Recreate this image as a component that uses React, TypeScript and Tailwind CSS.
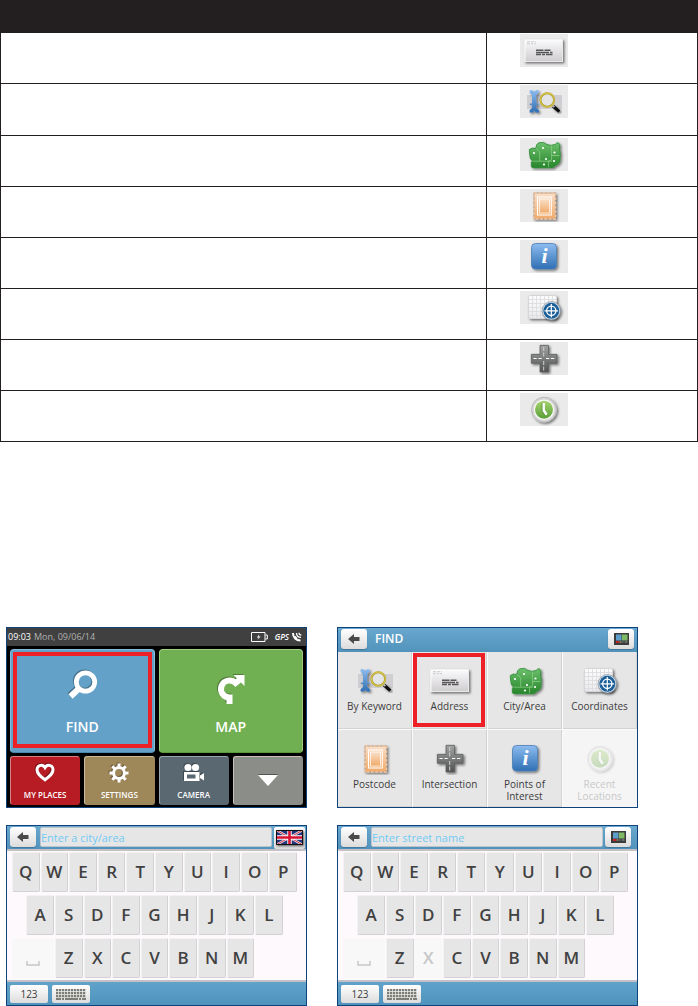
import type { ReactNode } from 'react'

function IconDefs() {
  return (
    <svg width="0" height="0" className="absolute" aria-hidden="true">
      <defs>
        <linearGradient id="paper" x1="0" y1="0" x2="0" y2="1">
          <stop offset="0" stopColor="#fbfafc" /><stop offset="1" stopColor="#cfcdd0" />
        </linearGradient>
        <linearGradient id="blue" x1="0" y1="0" x2="0" y2="1">
          <stop offset="0" stopColor="#8dbcf0" /><stop offset="1" stopColor="#2f6fb3" />
        </linearGradient>
        <linearGradient id="green" x1="0" y1="0" x2="0" y2="1">
          <stop offset="0" stopColor="#6cc06c" /><stop offset="1" stopColor="#27862b" />
        </linearGradient>
        <linearGradient id="orange" x1="0" y1="0" x2="0" y2="1">
          <stop offset="0" stopColor="#f9dfc9" /><stop offset="1" stopColor="#f0aa68" />
        </linearGradient>
        <linearGradient id="road" x1="0" y1="0" x2="0" y2="1">
          <stop offset="0" stopColor="#a2a3a3" /><stop offset="1" stopColor="#515252" />
        </linearGradient>
        <linearGradient id="lime" x1="0" y1="0" x2="0" y2="1">
          <stop offset="0" stopColor="#a5d46f" /><stop offset="1" stopColor="#5b9f38" />
        </linearGradient>
        <filter id="drop" x="-20%" y="-20%" width="150%" height="150%">
          <feDropShadow dx="1.5" dy="1.5" stdDeviation="1" floodColor="#000" floodOpacity="0.5" />
        </filter>
      </defs>
    </svg>
  )
}

const icons: Record<string, ReactNode> = {
  address: (
    <>
      <rect x="4.5" y="5.5" width="38" height="22" fill="url(#paper)" stroke="#e9e9e9" filter="url(#drop)" />
      <path d="M5 27V6h37" fill="none" stroke="#fff" strokeWidth="0.8" />
      <path d="M7 7.7h9M7 9.7h6M14 9.7h2" stroke="#cbcbcb" strokeDasharray="3 1" />
      <path d="M16 16.2h7.5M24.5 16.2h6M16 18.4h13M30 18.4h2.5M16 20.4h5M22 20.4h3M26 20.4h6.5" stroke="#58585b" strokeWidth="1.5" />
    </>
  ),
  keyword: (
    <>
      <rect x="7" y="10" width="35" height="14" fill="#cfced2" />
      <path
        d="M9.5 5.5l2-.5 2.500 1.500L17 5l2 .8-.5 2L16.200 10v8.500h2.300v1.600h-2.300V23l3 2.300-.5 2.200-2 .2L14.200 26l-2.300 1.700-2.200-.3-.2-2.100L12 23v-2.900H9.800v-1.600H12V10L9.800 8z"
        fill="url(#blue)" filter="url(#drop)"
      />
      <path d="M33 21l6.300 5.600" stroke="#111" strokeWidth="3.200" filter="url(#drop)" />
      <path d="M32 20l2.400 2.200" stroke="#c9c9c9" strokeWidth="1.600" />
      <circle cx="27.3" cy="15" r="6.800" fill="#e4e4e6" stroke="#a99a2c" strokeWidth="2" />
      <circle cx="27.3" cy="15" r="6.900" fill="none" stroke="#d6c443" strokeWidth="1.200" />
    </>
  ),
  city: (
    <>
      <path
        d="M9.3 11.5l3-1.4 3.5.3.8-3.6 2-2 5-.4 3 2 4 .9 4.500-.8 1.600-1.500 1.800-.2 1.400 2-.4 4.500.8 3-.3 8.500-1.400 2.700-3.600 2.400-2.200 1.800H13l-1.700-.9v-4.400l1.200-1.700-2-1.800-.8-4.200z"
        fill="url(#green)" stroke="#2c8a33" strokeWidth="0.800" filter="url(#drop)"
      />
      <path
        d="M16 10.500l3.700 3.200v9.300M12.500 23.200h19.500M28.600 23.200v6M31.600 7.500v14.200l-3.200 1.500M31.600 17.500H39.500"
        fill="none" stroke="#8fd18d" strokeWidth="0.700"
      />
      <g fill="#fff">
        <circle cx="23" cy="10" r="1.100" /><circle cx="14" cy="15" r="1.100" />
        <circle cx="34.500" cy="14.500" r="1.100" /><circle cx="26" cy="21" r="1.100" />
        <circle cx="34" cy="23" r="1.100" /><circle cx="24" cy="26.500" r="1.100" />
      </g>
    </>
  ),
  postcode: (
    <>
      <rect x="13.500" y="3.500" width="22.500" height="27" fill="#a39a93" filter="url(#drop)" />
      <rect x="14.500" y="4.500" width="20.500" height="25" fill="url(#orange)" />
      <rect x="14" y="4" width="21.500" height="26" fill="none" stroke="#f3c59d" strokeWidth="1.600" strokeDasharray="2.800 1.500" />
      <rect x="17.500" y="8" width="13.800" height="18" fill="none" stroke="#fff" />
      <rect x="19.500" y="10" width="10" height="14" fill="url(#orange)" stroke="#fff" strokeWidth="0.700" />
    </>
  ),
  info: (
    <>
      <rect x="11.500" y="3.500" width="25" height="25.500" rx="4" fill="url(#blue)" stroke="#4b7eb6" strokeWidth="0.800" filter="url(#drop)" />
      <text x="24.500" y="22.500" textAnchor="middle" fontFamily="Liberation Serif, serif" fontSize="22" fontWeight="bold" fontStyle="italic" fill="#fff">i</text>
    </>
  ),
  coordinates: (
    <>
      <rect x="8.500" y="4.500" width="28" height="23" rx="2" fill="url(#paper)" stroke="#d6d6d9" filter="url(#drop)" />
      <rect x="9" y="5" width="27" height="22" rx="2" fill="#fdfdfe" fillOpacity="0.600" />
      <path d="M12.500 5v22M16.500 5v22M20.500 5v22M24.500 5v22M28.500 5v22M32.500 5v22M9 8.500h27M9 12.500h27M9 16.500h27M9 20.500h27M9 24.500h27" stroke="#dadade" strokeWidth="0.800" />
      <circle cx="31.300" cy="19.800" r="9.200" fill="#dfe6ec" stroke="#6c7f90" strokeWidth="0.600" filter="url(#drop)" />
      <circle cx="31.300" cy="19.800" r="8" fill="#1b5f99" />
      <circle cx="31.300" cy="19.800" r="4.600" fill="none" stroke="#fff" strokeWidth="1.300" />
      <path d="M31.300 13v13.600M24.500 19.800h13.600" stroke="#fff" strokeWidth="1.200" />
    </>
  ),
  intersection: (
    <>
      <path d="M20 3.300h8.500v9H37v9h-8.500V30H20v-8.700h-8.700v-9H20z" fill="url(#road)" stroke="#5c5d5d" strokeWidth="0.800" filter="url(#drop)" />
      <path d="M13.500 16.500h3.200M18.500 16.500h3.200M26 16.500h3.200M31 16.500h3.200" stroke="#fff" strokeWidth="1.100" />
      <path d="M23.700 5v4M23.700 10.500v4M23.700 19v4M23.700 24.500v4" stroke="#cfcfcf" />
    </>
  ),
  recent: (
    <>
      <circle cx="24" cy="16.700" r="12.400" fill="#d6d7d6" stroke="#b8b9b8" filter="url(#drop)" />
      <circle cx="24" cy="16.700" r="10.200" fill="#fafafa" />
      <circle cx="24" cy="16.700" r="9" fill="url(#lime)" />
      <path d="M23.600 10v7.300l3 4.500" fill="none" stroke="#fff" strokeWidth="2.600" />
      <path d="M22 10v8.200l3.200 4.400" fill="none" stroke="#588a3a" strokeWidth="0.700" />
    </>
  ),
}

function SearchIcon({ name }: { name: string }) {
  return (
    <svg viewBox="0 0 48 33" width="48" height="33" className="block" aria-hidden="true">
      {icons[name]}
    </svg>
  )
}

const rows = [
  { icon: 'address', cell: 'h-[51px] pt-px' },
  { icon: 'keyword', cell: 'h-[52px] pt-px' },
  { icon: 'city', cell: 'h-[51px] pt-[2px]' },
  { icon: 'postcode', cell: 'h-[51px] pt-[2px]' },
  { icon: 'info', cell: 'h-[51px] pt-[2px]' },
  { icon: 'coordinates', cell: 'h-[51px] pt-[2px]' },
  { icon: 'intersection', cell: 'h-[51px] pt-[2px]' },
  { icon: 'recent', cell: 'h-[51px] pt-[2px]' },
]

function IconTable() {
  return (
    <table className="w-full table-fixed border-separate border-spacing-0 border-x border-[#231f20]">
      <thead>
        <tr className="bg-[#231f20]">
          <th className="h-[33px] w-[486px] p-0" />
          <th className="p-0" />
        </tr>
      </thead>
      <tbody>
        {rows.map(row => (
          <tr key={row.icon}>
            <td className="border-r border-b border-[#231f20] p-0" />
            <td className={`border-b border-[#231f20] pr-0 pb-0 pl-[33px] align-top ${row.cell}`}>
              <div className="w-[48px] bg-[#eaeaea]"><SearchIcon name={row.icon} /></div>
            </td>
          </tr>
        ))}
      </tbody>
    </table>
  )
}

function Screen({ children }: { children: ReactNode }) {
  return <section className="border border-[#0f437c]">{children}</section>
}

/* ---------- home screen ---------- */

const smallTiles = [
  {
    label: 'MY PLACES',
    color: 'bg-[#b71c24] border-t-[#d98085] border-l-[#d98085]',
    icon: (
      <path d="M10 16.800C5 13 2 10.500 2 6.700 2 3.800 4.200 2.200 6.300 2.200c1.700 0 2.900.9 3.700 2.300.8-1.400 2-2.300 3.700-2.300 2.100 0 4.300 1.600 4.300 4.500 0 3.800-3 6.300-8 10.100z" fill="none" stroke="#fff" strokeWidth="3" />
    ),
  },
  {
    label: 'SETTINGS',
    color: 'bg-[#9e8759] border-t-[#cbbd9f] border-l-[#cbbd9f]',
    icon: (
      <>
        <circle cx="10" cy="10" r="5.400" fill="none" stroke="#fff" strokeWidth="3" />
        <g stroke="#fff" strokeWidth="3">
          <path d="M10 .5v4M10 15.500v4M.5 10h4M15.500 10h4M3.300 3.300l2.800 2.800M13.900 13.900l2.800 2.800M3.300 16.700l2.800-2.800M13.900 6.100l2.800-2.800" />
        </g>
      </>
    ),
  },
  {
    label: 'CAMERA',
    color: 'bg-[#5a6872] border-t-[#9ba5ac] border-l-[#9ba5ac]',
    icon: (
      <>
        <circle cx="4" cy="4.500" r="3.600" fill="#fff" />
        <circle cx="11.500" cy="4.500" r="3.600" fill="#fff" />
        <path d="M0 9h15.500v9H0z" fill="#fff" />
        <path d="M16 12.500l4-2.500v7.500l-4-2.500z" fill="#fff" />
        <path d="M3 11.500h8.500v4H3z" fill="#5a6872" />
      </>
    ),
  },
]

function BigTile({ label, color, icon, marked }: { label: string; color: string; icon: ReactNode; marked?: boolean }) {
  return (
    <button className={`relative col-span-2 flex h-[104px] flex-col items-center rounded-[4px] border pt-[19px] ${color}`}>
      <svg viewBox="0 0 32 36" width="32" height="36" className="drop-shadow-[-1px_-1px_0_rgba(0,0,0,0.3)]">{icon}</svg>
      <span className="mt-3 text-[14px] leading-[20px] font-semibold text-white">{label}</span>
      {marked && <span className="absolute inset-x-[2px] top-[2px] bottom-[4px] border-4 border-[#ee2027]" />}
    </button>
  )
}

function HomeScreen() {
  return (
    <Screen>
      <div className="flex h-[18px] items-center bg-[#404040] pr-1 pl-px text-[9px] leading-[12px]">
        <span className="font-medium text-white">09:03</span>
        <span className="ml-[3px] text-[#b0b0b0]">Mon, 09/06/14</span>
        <svg viewBox="0 0 17 10" width="17" height="10" className="ml-auto" aria-hidden="true">
          <path d="M.5.5h13.500v9H.5zM14.500 3h1.800v4h-1.800" fill="none" stroke="#fff" />
          <path d="M8.500 2L5.800 5.500h2L6.300 8l3.400-3.600H7.600z" fill="#fff" />
        </svg>
        <span className="ml-[7px] text-[8px] font-semibold text-white italic">GPS</span>
        <svg viewBox="0 0 10 10" width="10" height="10" className="ml-[3px]" aria-hidden="true">
          <path d="M1 1C1 5.500 4 8.500 8.500 8.500M2.500 4.500L5 7" fill="none" stroke="#fff" strokeWidth="2" />
          <path d="M4.500 1C4.500 3.800 6 5.300 9 5.300M7 .8C7 2.200 7.600 3 9.300 3" fill="none" stroke="#fff" strokeWidth="1.300" />
        </svg>
      </div>
      <div className="grid grid-cols-4 gap-x-1 gap-y-[3px] bg-black px-[3px] pt-[3px] pb-[2px]">
        <BigTile
          label="FIND"
          marked
          color="bg-[#63a1c8] border-[#86bbdc] border-b-[#4887ae]"
          icon={
            <>
              <circle cx="19.500" cy="13" r="9.200" fill="none" stroke="#fff" strokeWidth="4.700" />
              <path d="M12.500 20L4.500 27.500" stroke="#fff" strokeWidth="6" />
            </>
          }
        />
        <BigTile
          label="MAP"
          color="bg-[#71b052] border-[#9bd07f] border-b-[#5a9a3c]"
          icon={
            <>
              <path d="M14.500 35V28.500A8.500 8.500 0 1 1 20.500 14L25 10.500" fill="none" stroke="#fff" strokeWidth="6" />
              <path d="M18.500 6h11v11z" fill="#fff" />
            </>
          }
        />
        {smallTiles.map(tile => (
          <button key={tile.label} className={`flex h-[49px] flex-col items-center rounded-[3px] border border-transparent pt-[6px] ${tile.color}`}>
            <svg viewBox="0 0 20 20" width="20" height="20" className="drop-shadow-[-1px_-1px_0_rgba(0,0,0,0.3)]">{tile.icon}</svg>
            <span className="mt-[7px] text-[8px] leading-[10px] font-semibold text-white">{tile.label}</span>
          </button>
        ))}
        <button aria-label="More" className="flex h-[49px] items-center justify-center rounded-[3px] border border-[#8b8d88] border-t-[#c9c0b6] border-l-[#c9c0b6] bg-[#8b8d88]">
          <svg viewBox="0 0 20 11" width="20" height="11" className="drop-shadow-[0_-1px_0_rgba(0,0,0,0.4)]">
            <path d="M0 0h20L10 11z" fill="#fff" />
          </svg>
        </button>
      </div>
    </Screen>
  )
}

/* ---------- shared header buttons ---------- */

function BackButton() {
  return (
    <button aria-label="Back" className="flex h-[20px] w-[26px] shrink-0 items-center justify-center rounded-[3px] bg-linear-to-b from-white to-[#dcdcdc] shadow-[0_1px_1px_#44759a]">
      <svg viewBox="0 0 12 10" width="12" height="10">
        <path d="M0 5L6 0v3h5.500v4H6v3z" fill="#4a4a4a" />
      </svg>
    </button>
  )
}

function HomeButton() {
  return (
    <button aria-label="Home" className="flex h-[20px] w-[26px] shrink-0 items-center justify-center rounded-[3px] bg-linear-to-b from-white to-[#dcdcdc] shadow-[0_1px_1px_#44759a]">
      <svg viewBox="0 0 15 12" width="15" height="12">
        <path d="M0 0h15v12H0z" fill="#3b3b3b" />
        <path d="M2 1.500h5.500v6H2z" fill="#5c9fca" />
        <path d="M8 1.500h5.500v6H8z" fill="#7fb965" />
        <path d="M2 8h3v2H2z" fill="#c81f27" />
        <path d="M5.500 8h2v2h-2z" fill="#8a774e" />
        <path d="M8 8h2.500v2H8z" fill="#4c5860" />
        <path d="M11 8h2.500v2H11z" fill="#6a6a6a" />
      </svg>
    </button>
  )
}

/* ---------- find menu ---------- */

const findOptions = [
  { icon: 'keyword', label: 'By Keyword' },
  { icon: 'address', label: 'Address', marked: true },
  { icon: 'city', label: 'City/Area' },
  { icon: 'coordinates', label: 'Coordinates' },
  { icon: 'postcode', label: 'Postcode' },
  { icon: 'intersection', label: 'Intersection' },
  { icon: 'info', label: 'Points of Interest' },
  { icon: 'recent', label: 'Recent Locations', disabled: true },
]

function FindScreen() {
  return (
    <Screen>
      <header className="flex h-[24px] items-start bg-linear-to-b from-[#69a8cf] to-[#5193bb] px-[3px] pt-px">
        <BackButton />
        <h2 className="ml-2 text-[12px] leading-[20px] font-semibold text-white">FIND</h2>
        <div className="ml-auto"><HomeButton /></div>
      </header>
      <div className="grid grid-cols-4 gap-px bg-[#fbfbfb]">
        {findOptions.map(option => (
          <button
            key={option.label}
            disabled={option.disabled}
            className={`relative flex h-[77px] flex-col items-center border-r border-b pt-[12px] ${option.disabled ? 'border-[#f5f5f5] bg-[#f5f5f5]' : 'border-[#d2d2d2] bg-[#e6e6e6]'}`}
          >
            <span className={option.disabled ? 'opacity-30' : ''}><SearchIcon name={option.icon} /></span>
            <span className={`mt-[3px] max-w-[60px] text-center text-[10px] leading-[12px] ${option.disabled ? 'text-[#c9c9c9]' : 'text-[#3c3c3c]'}`}>
              {option.label}
            </span>
            {option.marked && <span className="absolute top-px right-px bottom-px left-0 border-4 border-[#ee2027]" />}
          </button>
        ))}
      </div>
    </Screen>
  )
}

/* ---------- keyboards ---------- */

function Key({ letter, className = '', disabled }: { letter: string; className?: string; disabled?: boolean }) {
  return (
    <button
      disabled={disabled}
      className={`col-span-2 mr-px h-[40px] rounded-[2px] border text-[17px] leading-[38px] font-semibold ${className} ${
        disabled ? 'border-[#f7f7f7] bg-[#f7f8f7] text-[#c6c6c6]' : 'border-[#f3f2f3] border-r-[#d3d1d4] border-b-[#d3d1d4] bg-[#e6e6e6] text-[#414141]'
      }`}
    >
      {letter}
    </button>
  )
}

function Keyboard({ disabledKeys = '' }: { disabledKeys?: string }) {
  return (
    <div className="grid grid-cols-20 gap-y-[3px] border-y-2 border-[#c3c1c5] bg-[#fdf9fd] pt-px pr-2 pb-[2px] pl-[5px]">
      {'QWERTYUIOP'.split('').map(k => <Key key={k} letter={k} disabled={disabledKeys.includes(k)} />)}
      {'ASDFGHJKL'.split('').map(k => (
        <Key key={k} letter={k} className={k === 'A' ? 'col-start-2' : ''} disabled={disabledKeys.includes(k)} />
      ))}
      <button disabled aria-label="Space" className="col-span-3 col-start-1 mr-px flex h-[40px] items-end justify-center bg-[#f7f8f7] pb-3">
        <svg viewBox="0 0 14 5" width="14" height="5">
          <path d="M1 0v4h12V0" fill="none" stroke="#c6c6c6" strokeWidth="1.500" />
        </svg>
      </button>
      {'ZXCVBNM'.split('').map(k => <Key key={k} letter={k} disabled={disabledKeys.includes(k)} />)}
    </div>
  )
}

function FlagButton() {
  return (
    <button aria-label="Country" className="flex h-[22px] w-[31px] shrink-0 items-center justify-center rounded-[2px] bg-linear-to-b from-white to-[#dcdcdc] pb-[2px]">
      <svg viewBox="0 0 27 15" width="27" height="15" className="drop-shadow-[1px_1px_1px_rgba(0,0,0,0.6)]">
        <path d="M0 0h27v15H0z" fill="#20357e" />
        <path d="M0 0l27 15M27 0L0 15" stroke="#e8e4ee" strokeWidth="2.400" />
        <path d="M0 0l27 15M27 0L0 15" stroke="#d2232c" strokeWidth="0.900" />
        <path d="M13.500 0v15M0 7.500h27" stroke="#fff" strokeWidth="4.400" />
        <path d="M13.500 0v15M0 7.500h27" stroke="#d81230" strokeWidth="2.600" />
        <path d="M.5.5h26v14H.5z" fill="none" stroke="#111" />
      </svg>
    </button>
  )
}

function EntryScreen({ placeholder, action, disabledKeys }: { placeholder: string; action: ReactNode; disabledKeys?: string }) {
  return (
    <Screen>
      <header className="flex h-[23px] items-start bg-linear-to-b from-[#69a8cf] to-[#5193bb] pt-px pl-[3px]">
        <BackButton />
        <input
          aria-label={placeholder}
          placeholder={placeholder}
          className="mr-[2px] ml-1 h-[20px] min-w-0 flex-1 rounded-[2px] border border-[#b9c4cc] bg-[#e6e6e6] px-0 text-[11px] leading-[18px] placeholder:text-[#72caf5] placeholder:opacity-100"
        />
        {action}
      </header>
      <Keyboard disabledKeys={disabledKeys} />
      <footer className="flex h-[23px] gap-1 bg-linear-to-b from-[#60a2ca] to-[#4f93bc] px-[3px] pt-[3px]">
        <button className="h-[18px] w-[38px] rounded-[2px] bg-linear-to-b from-white to-[#dcdcdc] text-[10px] leading-[18px] text-[#3c3c3c]">123</button>
        <button aria-label="Keyboard layout" className="flex h-[18px] w-[38px] items-center justify-center rounded-[2px] bg-linear-to-b from-white to-[#dcdcdc]">
          <svg viewBox="0 0 30 11" width="30" height="11">
            <path d="M0 1.200h30M0 4.200h30M0 7.200h30" stroke="#7c7d75" strokeWidth="2.200" strokeDasharray="2.300 0.700" />
            <path d="M0 10h5M6 10h2M9 10h13M23 10h2M26 10h4" stroke="#7c7d75" strokeWidth="1.800" />
          </svg>
        </button>
      </footer>
    </Screen>
  )
}

export default function App() {
  return (
    <main className="bg-white font-['Open_Sans',sans-serif]">
      <IconDefs />
      <IconTable />
      <div className="mt-[185px] grid grid-cols-2 gap-x-[30px] gap-y-[17px] pr-[60px] pl-[6px]">
        <HomeScreen />
        <FindScreen />
        <EntryScreen placeholder="Enter a city/area" action={<div className="pr-px"><FlagButton /></div>} />
        <EntryScreen placeholder="Enter street name" disabledKeys="X" action={<div className="pr-[6px]"><HomeButton /></div>} />
      </div>
    </main>
  )
}
